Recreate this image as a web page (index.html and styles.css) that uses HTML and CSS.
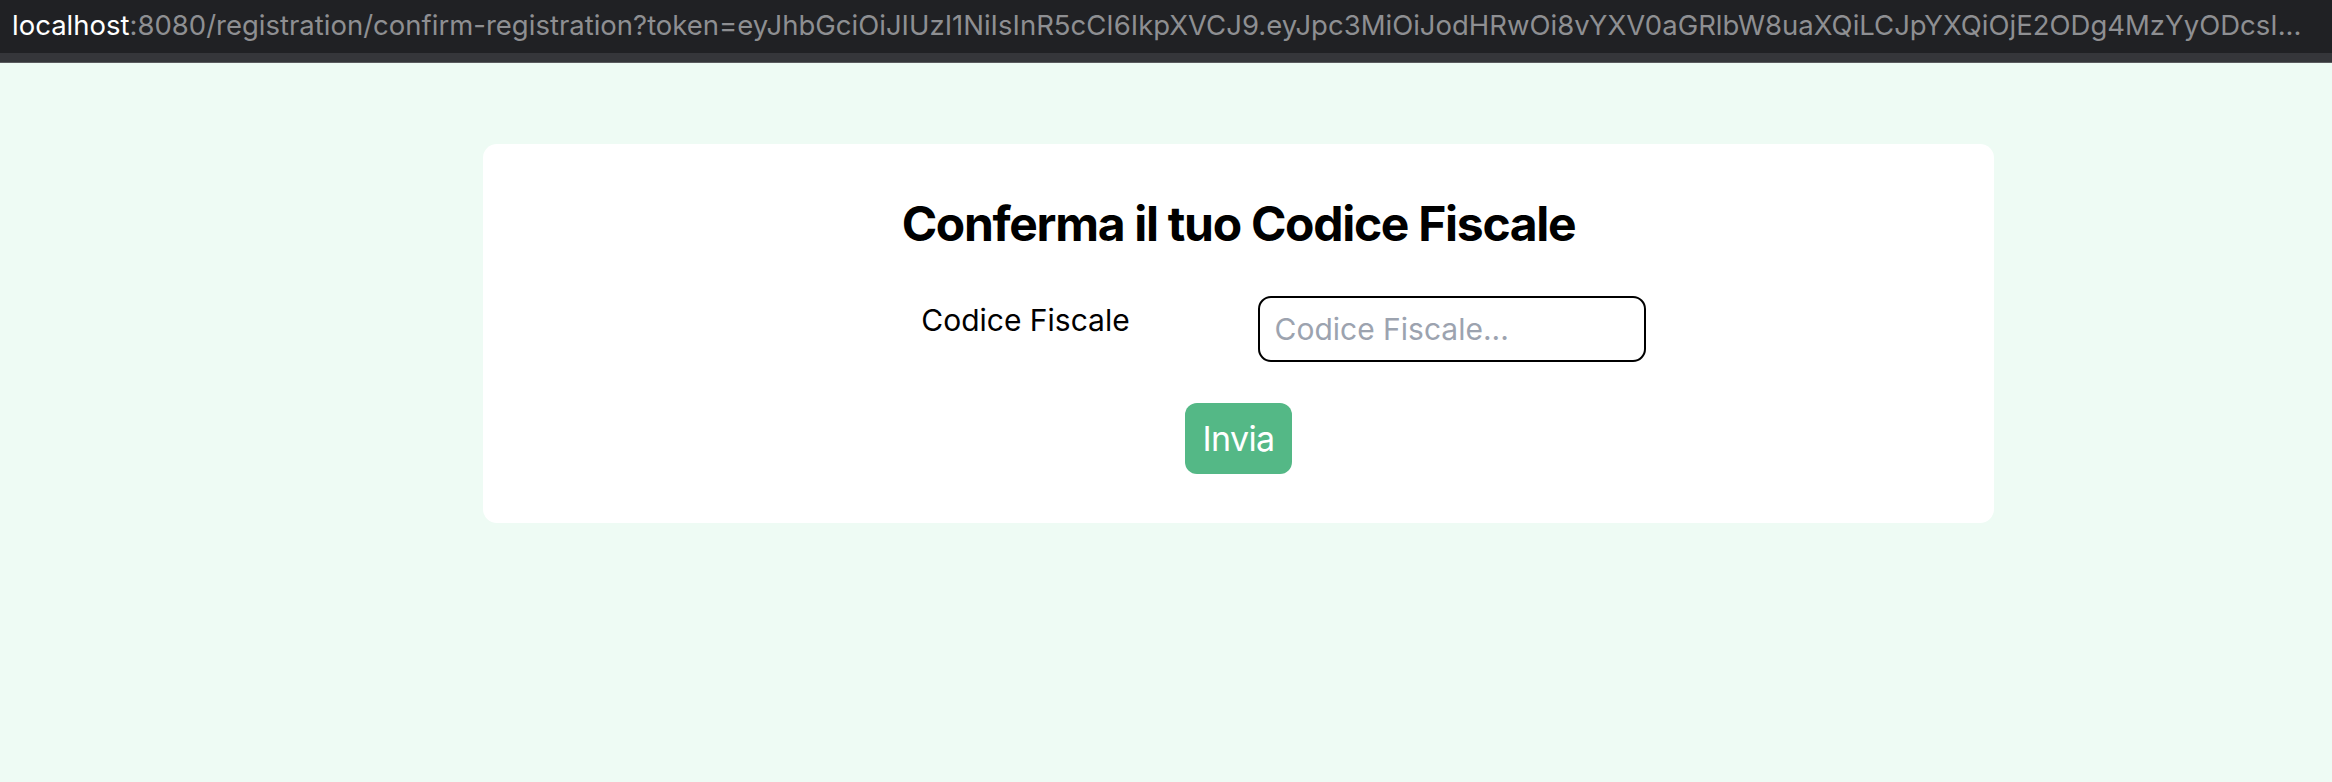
FILE: index.html
```html
<!DOCTYPE html>
<html lang="it">
<head>
<meta charset="utf-8">
<title>Conferma registrazione</title>
<link rel="stylesheet" href="styles.css">
</head>
<body>
<header class="urlbar">
  <div class="url"><span class="host">localhost</span><span class="path">:8080/registration/confirm-registration?token=eyJhbGciOiJIUzI1NiIsInR5cCI6IkpXVCJ9.eyJpc3MiOiJodHRwOi8vYXV0aGRlbW8uaXQiLCJpYXQiOjE2ODg4MzYyODcsI...</span></div>
</header>
<div class="strip"></div>
<main class="page">
  <section class="card">
    <h1 class="title">Conferma il tuo Codice Fiscale</h1>
    <form class="form">
      <div class="row">
        <label class="label" for="cf">Codice Fiscale</label>
        <input class="input" id="cf" type="text" placeholder="Codice Fiscale...">
      </div>
      <div class="actions">
        <button class="btn" type="button">Invia</button>
      </div>
    </form>
  </section>
</main>
</body>
</html>
```
FILE: styles.css
```css
* { box-sizing: border-box; }
html, body { margin: 0; padding: 0; }
body {
  background: #eefbf4;
  font-family: Inter, "Noto Sans", sans-serif;
  color: #000;
  min-height: 782px;
}
.urlbar {
  height: 53px;
  background: #202124;
  display: flex;
  align-items: center;
  padding-left: 12px;
  overflow: hidden;
}
.url {
  font-family: Inter, "Noto Sans", sans-serif;
  font-size: 27.5px;
  white-space: nowrap;
  line-height: 1;
  padding-bottom: 2px;
}
.host { color: #ffffff; }
.path { color: #8e8f92; }
.strip {
  height: 10px;
  background: #35363a;
  border-bottom: 1px solid #5a5b5e;
}
.page {
  padding-top: 81px;
  padding-left: 483px;
}
.card {
  width: 1511px;
  background: #fff;
  border-radius: 14px;
  padding: 56px 0 49px;
}
.title {
  margin: 0;
  text-align: center;
  font-size: 48px;
  line-height: 48px;
  font-weight: 700;
  letter-spacing: -1.3px;
}
.form {
  margin-top: 48px;
}
.row {
  display: grid;
  grid-template-columns: 388px 388px;
  column-gap: 38px;
  justify-content: center;
  align-items: start;
}
.label {
  text-align: center;
  font-size: 30px;
  line-height: 36px;
  margin-top: 6px;
}
.input {
  width: 388px;
  height: 66px;
  border: 2px solid #000;
  border-radius: 13px;
  padding: 0 15px;
  font-family: Inter, "Noto Sans", sans-serif;
  font-size: 30px;
  outline: none;
  background: #fff;
}
.input::placeholder { color: #9ca3af; }
.actions {
  margin-top: 41px;
  display: flex;
  justify-content: center;
}
.btn {
  height: 71px;
  padding: 0 17px;
  border: none;
  border-radius: 12px;
  background: #54b886;
  color: #fff;
  font-family: Inter, "Noto Sans", sans-serif;
  font-size: 34px;
  letter-spacing: -0.6px;
  line-height: 71px;
  cursor: pointer;
}
```
